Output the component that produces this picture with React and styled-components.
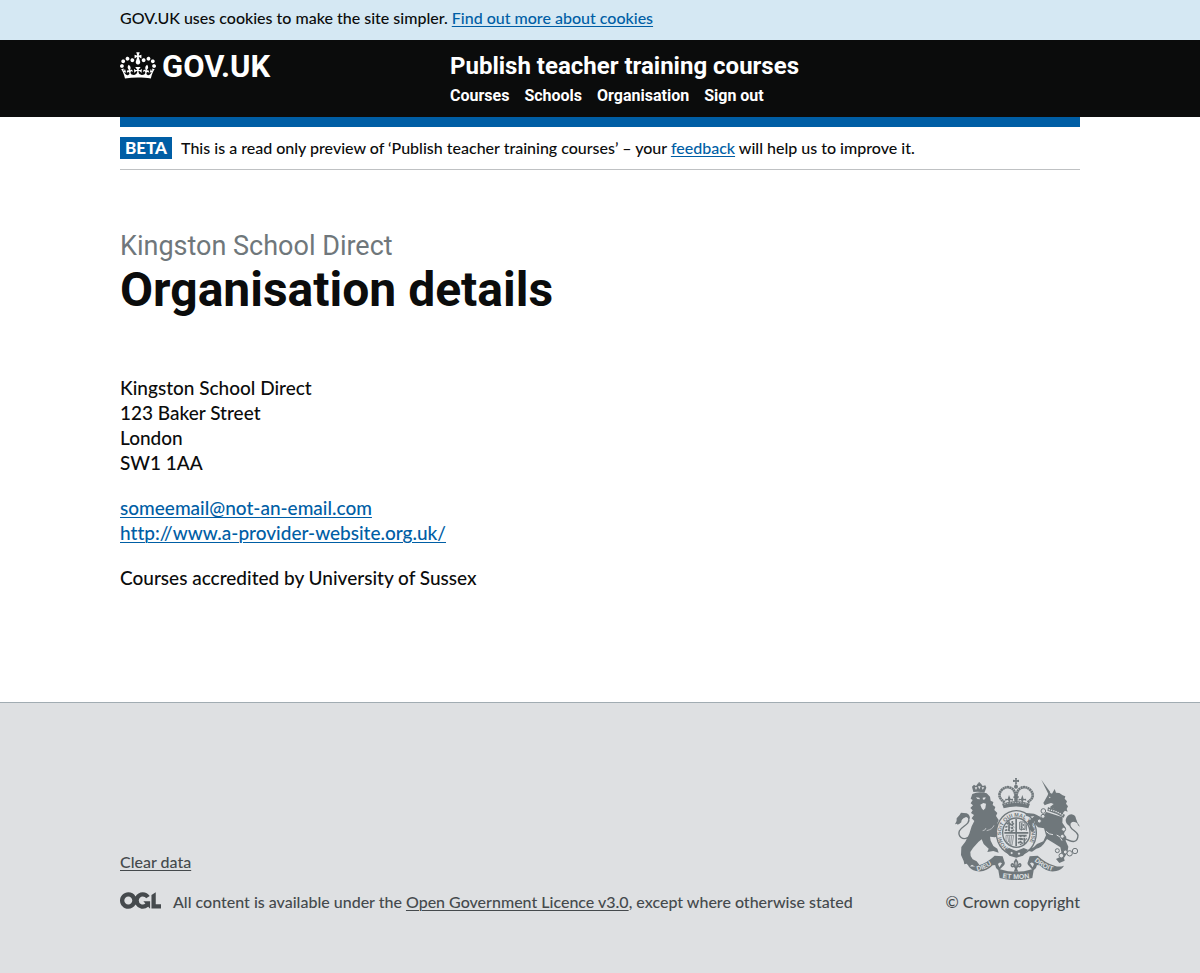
import React from "react";
import styled, { createGlobalStyle } from "styled-components";

const GlobalStyle = createGlobalStyle`
  * { box-sizing: border-box; }
  body {
    margin: 0;
    background: #dee0e2;
    color: #0b0c0c;
    font-family: Lato, "Liberation Sans", sans-serif;
    font-size: 19px;
    font-variant-ligatures: none;
    font-weight: 500;
    line-height: 25px;
  }
`;

const display = `Roboto, "Liberation Sans", sans-serif`;

const Container = styled.div`
  max-width: 960px;
  margin: 0 30px;
  @media (min-width: 1020px) {
    margin: 0 auto;
  }
`;

const Link = styled.a`
  color: ${(p) => (p.$muted ? "#454a4d" : "#005ea5")};
  text-decoration: underline;
  text-decoration-thickness: 1px;
  text-underline-offset: 2px;
`;

const CookieBar = styled.div`
  background: #d5e8f3;
  padding: 8px 0 12px;
  font-size: 16px;
  line-height: 20px;
`;

const Header = styled.header`
  background: #0b0c0c;
  color: #fff;
  font-family: ${display};
`;

const HeaderInner = styled(Container)`
  display: flex;
  flex-wrap: wrap;
  padding: 11px 0;
`;

const LogoColumn = styled.div`
  width: 330px;
`;

const Logo = styled.a`
  display: inline-flex;
  align-items: flex-start;
  gap: 6px;
  color: #fff;
  font-size: 31px;
  font-weight: 700;
  line-height: 32px;
  text-decoration: none;
`;

const CrownIcon = styled.svg`
  display: block;
  width: 36px;
  height: 27px;
  margin-top: 1px;
  fill: currentColor;
`;

const ServiceName = styled.a`
  display: block;
  color: #fff;
  font-size: 24px;
  font-weight: 700;
  line-height: 30px;
  text-decoration: none;
`;

const Nav = styled.nav`
  display: flex;
  gap: 15px;
  padding-top: 5px;
`;

const NavLink = styled.a`
  color: #fff;
  font-size: 16px;
  font-weight: 700;
  line-height: 20px;
  text-decoration: none;
`;

const Page = styled.div`
  background: #fff;
`;

const BlueBar = styled.div`
  height: 10px;
  background: #005ea5;
`;

const PhaseBanner = styled.div`
  display: flex;
  align-items: center;
  gap: 9px;
  padding: 10px 0;
  border-bottom: 1px solid #bfc1c3;
  font-size: 16px;
  line-height: 22px;
`;

const PhaseTag = styled.strong`
  padding: 0 5px;
  background: #005ea5;
  color: #fff;
  font-size: 17px;
  font-weight: 900;
`;

const Main = styled.main`
  padding: 60px 0 112px;
`;

const Heading = styled.h1`
  margin: 0 0 58px;
  font-family: ${display};
  font-size: 48px;
  font-weight: 700;
  line-height: 54px;
`;

const Caption = styled.span`
  display: block;
  color: #6f777b;
  font-size: 27px;
  font-weight: 400;
  line-height: 33px;
`;

const Paragraph = styled.p`
  margin: 0 0 20px;
  &:last-child { margin-bottom: 0; }
`;

const Footer = styled.footer`
  border-top: 1px solid #a1acb2;
  background: #dee0e2;
  color: #454a4d;
  font-size: 16px;
  line-height: 20px;
`;

const FooterInner = styled(Container)`
  display: flex;
  flex-wrap: wrap;
  align-items: flex-end;
  justify-content: space-between;
  gap: 30px;
  padding: 75px 0 60px;
`;

const Licence = styled.div`
  display: flex;
  align-items: flex-start;
  gap: 12px;
  margin-top: 20px;
`;

const OglIcon = styled.svg`
  flex: none;
  width: 41px;
  height: 17px;
  fill: currentColor;
`;

const Copyright = styled.a`
  display: flex;
  flex-direction: column;
  align-items: flex-end;
  gap: 12px;
  color: #454a4d;
  text-decoration: none;
`;

const ArmsSvg = styled.svg`
  display: block;
  width: 125px;
  height: 102px;
`;

const Motto = styled.text`
  fill: ${(p) => (p.$onRibbon ? "#dee0e2" : "#6f777b")};
  font-family: "Liberation Sans", sans-serif;
  font-size: ${(p) => p.$size}px;
  font-weight: 700;
`;

function Crown() {
  return (
    <CrownIcon viewBox="0 0 132 97" aria-hidden="true">
      <path d="M25 30.2c3.5 1.5 7.7-.2 9.1-3.7 1.5-3.6-.2-7.8-3.9-9.2-3.6-1.4-7.6.3-9.1 3.9-1.4 3.5.3 7.5 3.9 9zM9 39.5c3.6 1.5 7.8-.2 9.2-3.7 1.5-3.6-.2-7.8-3.9-9.1-3.6-1.5-7.6.2-9.1 3.8-1.4 3.5.3 7.5 3.8 9zM4.4 57.2c3.5 1.5 7.7-.2 9.1-3.8 1.5-3.6-.2-7.7-3.9-9.1-3.5-1.5-7.6.3-9.1 3.8-1.4 3.5.3 7.6 3.9 9.1zm38.3-21.4c3.5 1.5 7.7-.2 9.1-3.8 1.5-3.6-.2-7.7-3.9-9.1-3.6-1.5-7.6.3-9.1 3.8-1.3 3.6.4 7.7 3.9 9.1zm64.4-5.6c-3.6 1.5-7.8-.2-9.1-3.7-1.5-3.6.2-7.8 3.8-9.2 3.6-1.4 7.7.3 9.2 3.9 1.3 3.5-.4 7.5-3.9 9zm15.9 9.3c-3.6 1.5-7.7-.2-9.1-3.7-1.5-3.6.2-7.8 3.7-9.1 3.6-1.5 7.7.2 9.2 3.8 1.5 3.5-.3 7.5-3.8 9zm4.7 17.7c-3.6 1.5-7.8-.2-9.2-3.8-1.5-3.6.2-7.7 3.9-9.1 3.6-1.5 7.7.3 9.2 3.8 1.3 3.5-.4 7.6-3.9 9.1zM89.3 35.8c-3.6 1.5-7.8-.2-9.2-3.8-1.4-3.6.2-7.7 3.9-9.1 3.6-1.5 7.7.3 9.2 3.8 1.4 3.6-.3 7.7-3.9 9.1zM69.7 17.7l8.9 4.7V9.3l-8.9 2.8c-.2-.3-.5-.6-.9-.9L72.4 0H59.6l3.5 11.2c-.3.3-.6.5-.9.9l-8.8-2.8v13.1l8.8-4.7c.3.3.6.7.9.9l-5 15.4v.1c-.2.8-.4 1.6-.4 2.4 0 4.1 3.1 7.5 7 8.1h.2c.3 0 .7.1 1 .1.4 0 .7 0 1-.1h.2c4-.6 7.1-4.1 7.1-8.1 0-.8-.1-1.7-.4-2.4V34l-5.1-15.4c.4-.2.7-.6 1-.9zM66 92.8c16.9 0 32.8 1.1 47.1 3.2 4-16.9 8.9-26.7 14-33.5l-9.6-3.4c1 4.9 1.1 7.2 0 10.2-1.5-1.4-3-4.3-4.2-8.7L108.6 76c2.8-2 5-3.2 7.5-3.3-4.4 9.4-10 11.9-13.6 11.2-4.3-.8-6.3-4.6-5.6-7.9 1-4.7 5.7-5.9 8-.5 4.3-8.7-3-11.4-7.6-8.8 7.1-7.2 7.9-13.5 2.1-21.1-8 6.1-8.1 12.3-4.5 20.8-4.7-5.4-12.1-2.5-9.5 6.2 3.4-5.2 7.9-2 7.2 3.1-.6 4.3-6.4 7.8-13.5 7.2-10.3-.9-10.9-8-11.2-13.8 2.5-.5 7.1 1.8 11 7.3L80.2 60c-4.1 4.4-8 5.3-12.3 5.4 1.4-4.4 8-11.6 8-11.6H55.5s6.4 7.2 7.9 11.6c-4.2-.1-8-1-12.3-5.4l1.4 16.4c3.9-5.5 8.5-7.7 10.9-7.3-.3 5.8-.9 12.8-11.1 13.8-7.2.6-12.9-2.9-13.5-7.2-.7-5 3.8-8.3 7.1-3.1 2.7-8.7-4.6-11.6-9.4-6.2 3.7-8.5 3.6-14.7-4.6-20.8-5.8 7.6-5 13.9 2.2 21.1-4.7-2.6-11.9.1-7.7 8.8 2.3-5.5 7.1-4.2 8.1.5.7 3.3-1.3 7.1-5.7 7.9-3.5.7-9-1.8-13.5-11.2 2.5.1 4.7 1.3 7.5 3.3l-4.7-15.4c-1.2 4.4-2.7 7.2-4.3 8.7-1.1-3-.9-5.3 0-10.2l-9.5 3.4c5 6.9 9.9 16.7 14 33.5 14.8-2.1 30.8-3.2 47.7-3.2z" />
    </CrownIcon>
  );
}

function Ogl() {
  return (
    <OglIcon viewBox="0 0 483.2 195.7" role="img" aria-label="Open Government Licence">
      <path d="M421.5 142.8V.1l-50.7 32.3v161.1h112.4v-50.7zm-122.3-9.6A47.12 47.12 0 0 1 221 97.8c0-26 21.1-47.1 47.1-47.1 16.7 0 31.4 8.7 39.7 21.8l42.7-27.2A97.63 97.63 0 0 0 268.1 0c-36.5 0-68.3 20.1-85.1 49.7A98 98 0 0 0 97.8 0C43.9 0 0 43.9 0 97.8s43.9 97.8 97.8 97.8c36.5 0 68.3-20.1 85.1-49.7a97.76 97.76 0 0 0 149.6 25.4l19.4 22.2h3v-87.8h-80l24.3 27.5zM97.8 145c-26 0-47.1-21.1-47.1-47.1s21.1-47.1 47.1-47.1 47.1 21.1 47.1 47.1S123.8 145 97.8 145" />
    </OglIcon>
  );
}

function RoyalArms() {
  const ink = "#6f777b";
  const ground = "#dee0e2";
  return (
    <ArmsSvg viewBox="45 24 375 306" aria-hidden="true" fill={ink} stroke="none">
      {/* lion: crown, head and mane, body, legs, tail */}
      <path d="M100 66L96 50l6-6 6 4 6-8 8 0 6 8 8-2 3 7-6 15q-16-5-33-2z" />
      <path d="M104 52l4 8 4-8zM114 49l4 9 4-9zM125 52l3 7 5-7z" fill={ground} />
      <path d="M116 36h3v6h-3z" />
      <path d="M97 72q20-9 43-2l10 10 2 12 8 4-2 9 8 6-3 9 9 9-4 9 8 12-4 10 8 10 4 16-6 10-13 6-15-2 2 12 8 16 12 8 4 12-16-5-18 3 4-10-15-14-6-14-10 8-16 18-8 12 1 12 6 10 12 6 8 10-10 8-12-8-8 6-8-9-7 2-2-10-8-18 1-24 12-16 12-24 7-22 8-16-8-8 7-10-9-6 5-8-7-7 8-8-7-6 6-10-6-4z" />
      <path d="M108 82l10 1 2 5-8-1zM128 83l9-1-2 6-6 1zM121 104l9-5 8 2-2 14-6 6-5-6z" fill={ground} />
      <path d="M140 182q18-4 22-16M128 182q8 0 10-8" fill="none" stroke={ground} strokeWidth="2" />
      <path d="M84 202C68 213 53 198 58 183C64 168 92 164 86 144C81 134 67 141 63 150" fill="none" stroke={ink} strokeWidth="4" />
      <path d="M45 163q7-10 5-18 10-10 13-17l17 2q12 6 9 17-7-8-14-5-12 5-11 15-7 7-12 7 1-5-7-1z" />

      {/* imperial crown */}
      <g fill="none" stroke={ink}>
        <path d="M194 97Q169 80 184 61Q198 46 215 55Q227 61 228 92" strokeWidth="8" strokeDasharray="6 1" />
        <path d="M263 97Q288 80 272 61Q258 46 241 55Q229 61 228 92" strokeWidth="8" strokeDasharray="6 1" />
      </g>
      <path d="M225 24h6l-1 7 7-2v7l-7-1 1 8-6 1 1-9-7 1v-7l7 2z" />
      <circle cx="228" cy="50" r="6" />
      <path d="M186 101Q228 85 270 101l-5 14q-37-11-74 0z" />
      <path d="M193 103Q228 92 263 103" fill="none" stroke={ground} strokeWidth="2" strokeDasharray="4 4" />
      <path d="M207 97l-3-7-9 2 1-6 7 1 4-12 5 12 7-1v6l-8-2-2 7zM246 97l-3-7-8 2 1-6 7 1 4-12 4 12 7-1 1 6-8-2-3 7zM223 92l1-7-4-1 1-6 5 1-1-6h7l-1 6 5-1v6l-4 1 1 7z" />

      {/* garter with its motto, and the quartered shield */}
      <ellipse cx="229" cy="189" rx="62" ry="69" />
      <ellipse cx="229" cy="189" rx="58" ry="65" fill={ground} />
      <path id="garter" d="M204 234A46 51 0 1 1 254 234" fill="none" />
      <Motto $size={16}>
        <textPath href="#garter">HONI SOIT QUI MAL Y PENSE</textPath>
      </Motto>
      <path d="M194 239l13-5 22 9 22-9 13 5-15 18-20 6-21-6z" />
      <path d="M211 249l4-4 4 4-4 4zM233 251l4-4 4 4-4 4z" fill={ground} />
      <ellipse cx="229" cy="188" rx="43" ry="46" />
      <ellipse cx="229" cy="188" rx="39" ry="42" fill={ground} />
      <path d="M193 186h72v5h-72zM226 147h5v82h-5z" />
      <g fill="none" stroke={ink} strokeWidth="5">
        <path d="M200 162q7-5 10 0t12-2M196 172q8-5 13 0t13-2M195 182q8-5 13 0t14-2M207 154v28M217 153v29" strokeDasharray="7 2" />
        <path d="M235 197h27M234 208q9-5 14 0t13-2M234 219q8-5 12 0t10-2M242 194v31M253 194v27" strokeDasharray="7 2" />
        <path d="M239 156h16v22h-16zM244 182V160l8 5-8 5 8 8M259 163v19" strokeWidth="3" />
        <path d="M198 196v14q4 13 18 16l5-30zM203 197l3 19M209 197v23M215 197l-3 26" strokeWidth="2" />
      </g>

      {/* unicorn: horn, head, collar, body, legs, tail, chain */}
      <path d="M304 29l27 38-6 5z" />
      <path d="M310 99l13-23 3-9 10 4 8-14 4 11 10 1 10 7 8 3-2 7 7 8-3 7 6 8-4 8 3 8-8-3-8 8q-20-12-38-18l12-10-8-3-12 4-7 3z" />
      <path d="M326 80l6 1-3 4z" fill={ground} />
      <path d="M324 111l7 4 4-7 6 9 6-7 5 10 7-6 4 11 8-4-2 11 6 2-4 9q-23-14-49-21z" />
      <path d="M326 119q22 3 42 17" fill="none" stroke={ground} strokeWidth="4" strokeDasharray="4 3" />
      <path d="M319 126l49 16-1 16 10 15-5 19 7 9-2 11 8 18-3 18-10 16 2 8-16 7-10-12 12-6 4-15-3-14-19-12-21-13q-9 16-18 23-7 4-14 6l-13 9-14-3q8-9 19-10l10-10 19-8 8-18-6-21-18-3-9-10-1-8-9 9 3 8 6 9-8 7-8-11 1-9-6-6 1-8 10-6 9-9-14 2-10-2-4-9 12 1 15 1 14 6 9 7z" />
      <path d="M293 135q10 1 15 9M318 184q9 10 21 10M350 195q12 3 16 17" fill="none" stroke={ground} strokeWidth="3" />
      <path d="M371 203Q413 229 414 196C412 181 386 180 389 160Q393 148 409 154" fill="none" stroke={ink} strokeWidth="4" />
      <path d="M420 170q-8-3-8-10-7-6-15-4-8 3-6 13-14-6-14-19 3-15 17-17 12 1 14 13 2 10 12 24z" />
      <g fill={ground} stroke={ink} strokeWidth="3">
        <circle cx="310" cy="123" r="7" />
        <circle cx="309" cy="139" r="6" />
        <circle cx="298" cy="153" r="6" />
        <circle cx="371" cy="178" r="6" />
        <circle cx="367" cy="199" r="6" />
        <circle cx="352" cy="242" r="6" />
        <circle cx="364" cy="257" r="7" />
        <circle cx="376" cy="246" r="6" />
        <circle cx="389" cy="250" r="8" />
        <circle cx="405" cy="243" r="8" />
      </g>

      {/* ribbon */}
      <path d="M85 287q15 5 26 1 29-8 53-31l24 2 6 19-24 7-12 1q-22 23-50 17-17-5-23-16z" />
      <path d="M372 287q-15 5-26 1-29-8-53-31l-24 2-6 19 24 7 12 1q22 23 50 17 17-5 23-16z" />
      <path d="M166 281q-3 9 9 20l4 23q49 13 98 0l4-23q13-11 9-20-5-12-20-9-12 4-5 14l11 12q-48 15-96 0l12-12q7-10-6-14-15-3-20 9z" />
      <path d="M174 282q5-8 12-2l-8 12zM282 282q-5-8-12-2l8 12z" fill={ground} />
      <path id="ribbon-left" d="M112 303Q142 297 168 274" fill="none" />
      <path id="ribbon-centre" d="M180 323Q228 331 276 323" fill="none" />
      <path id="ribbon-right" d="M283 273Q310 298 350 306" fill="none" />
      <Motto $size={20} $onRibbon>
        <textPath href="#ribbon-left">DIEU</textPath>
      </Motto>
      <Motto $size={21} $onRibbon>
        <textPath href="#ribbon-centre" startOffset="50%" textAnchor="middle">ET MON</textPath>
      </Motto>
      <Motto $size={20} $onRibbon>
        <textPath href="#ribbon-right">DROIT</textPath>
      </Motto>
      <path d="M228 265l7 11-3 11q1-9 9-8 6 4 2 11-5 4-9 1l-3 5 4 9h-14l4-9-3-5q-5 3-9-1-4-7 3-11 7-1 9 8l-4-11z" />
      <path d="M228 274l2 5-2 12-2-12zM237 284q4 1 1 4-3 0-1-4zM219 284q-4 1-1 4 3 0 1-4z" fill={ground} />
    </ArmsSvg>
  );
}

const navItems = ["Courses", "Schools", "Organisation", "Sign out"];

export default function App() {
  return (
    <>
      <GlobalStyle />
      <CookieBar>
        <Container>
          GOV.UK uses cookies to make the site simpler. <Link href="#cookies">Find out more about cookies</Link>
        </Container>
      </CookieBar>
      <Header>
        <HeaderInner>
          <LogoColumn>
            <Logo href="#home">
              <Crown />
              GOV.UK
            </Logo>
          </LogoColumn>
          <div>
            <ServiceName href="#service">Publish teacher training courses</ServiceName>
            <Nav aria-label="Main">
              {navItems.map((item) => (
                <NavLink key={item} href="#nav">{item}</NavLink>
              ))}
            </Nav>
          </div>
        </HeaderInner>
      </Header>
      <Page>
        <Container>
          <BlueBar />
          <PhaseBanner>
            <PhaseTag>BETA</PhaseTag>
            <span>
              This is a read only preview of ‘Publish teacher training courses’ – your{" "}
              <Link href="#feedback">feedback</Link> will help us to improve it.
            </span>
          </PhaseBanner>
          <Main>
            <Heading>
              <Caption>Kingston School Direct</Caption>
              Organisation details
            </Heading>
            <Paragraph>
              Kingston School Direct
              <br />
              123 Baker Street
              <br />
              London
              <br />
              SW1 1AA
            </Paragraph>
            <Paragraph>
              <Link href="mailto:someemail@not-an-email.com">someemail@not-an-email.com</Link>
              <br />
              <Link href="http://www.a-provider-website.org.uk/">http://www.a-provider-website.org.uk/</Link>
            </Paragraph>
            <Paragraph>Courses accredited by University of Sussex</Paragraph>
          </Main>
        </Container>
      </Page>
      <Footer>
        <FooterInner>
          <div>
            <Link $muted href="#clear">Clear data</Link>
            <Licence>
              <Ogl />
              <span>
                All content is available under the{" "}
                <Link $muted href="#licence">Open Government Licence v3.0</Link>, except where otherwise stated
              </span>
            </Licence>
          </div>
          <Copyright href="#copyright">
            <RoyalArms />
            © Crown copyright
          </Copyright>
        </FooterInner>
      </Footer>
    </>
  );
}
